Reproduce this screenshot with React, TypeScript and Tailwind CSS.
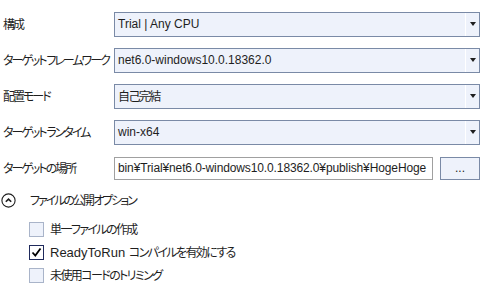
import type { ReactNode } from "react";

const font = { fontFamily: '"Liberation Sans", "Noto Sans CJK JP", sans-serif' };

// Japanese runs: proportional kana, tightened to the narrow UI font of the reference
function J({ children, tight }: { children: ReactNode; tight?: boolean }) {
  return (
    <span
      className={
        tight
          ? 'font-["Noto_Sans_CJK_JP"] text-[12px] tracking-[-2px] [font-feature-settings:"palt"_1]'
          : 'font-["Noto_Sans_CJK_JP"] text-[12px] tracking-[-1.6px] [font-feature-settings:"palt"_1]'
      }
    >
      {children}
    </span>
  );
}

function Dropdown({ value }: { value: ReactNode }) {
  return (
    <div className="flex h-[25px] w-full items-stretch border border-[#7a8aa6] bg-[#eef2fb]">
      <div className="flex flex-1 items-center truncate whitespace-nowrap pl-[3px] text-[12px] text-[#1e1e1e]">{value}</div>
      <div className="flex w-[14px] items-center justify-center border-l border-white">
        <svg width="6" height="4" viewBox="0 0 6 4">
          <path d="M0 0h6L3 4z" fill="#1e1e1e" />
        </svg>
      </div>
    </div>
  );
}

function Row({ label, children }: { label: string; children: ReactNode }) {
  return (
    <div className="grid h-9 grid-cols-[114px_1fr] items-center">
      <div className="whitespace-nowrap pl-[3px] text-[12px] text-[#1e1e1e]">
        <J tight>{label}</J>
      </div>
      {children}
    </div>
  );
}

function Check({ label, checked }: { label: ReactNode; checked?: boolean }) {
  return (
    <div className="flex h-[23px] items-center gap-[6px] pl-[29px]">
      <div
        className={
          checked
            ? "flex h-[15px] w-[15px] items-center justify-center border border-[#1f2a5c] bg-white"
            : "h-[15px] w-[15px] border border-[#a9b4c9] bg-[#eef2fb]"
        }
      >
        {checked && (
          <svg width="11" height="11" viewBox="0 0 11 11">
            <path d="M1.5 5.5l2.8 3L9.5 1.5" fill="none" stroke="#000" strokeWidth="1.8" />
          </svg>
        )}
      </div>
      <span className="whitespace-nowrap text-[13px] text-[#1e1e1e]">{label}</span>
    </div>
  );
}

export default function App() {
  return (
    <div className="h-[291px] w-[484px] overflow-hidden bg-white pr-[4px] pt-[6px]" style={font}>
      <Row label="構成">
        <Dropdown value="Trial | Any CPU" />
      </Row>
      <Row label="ターゲット フレームワーク">
        <Dropdown value="net6.0-windows10.0.18362.0" />
      </Row>
      <Row label="配置モード">
        <Dropdown value={<J>自己完結</J>} />
      </Row>
      <Row label="ターゲット ランタイム">
        <Dropdown value="win-x64" />
      </Row>
      <Row label="ターゲットの場所">
        <div className="flex items-center gap-[7px]">
          <div className="flex h-[23px] min-w-0 flex-1 items-center overflow-hidden whitespace-nowrap border border-[#a0a0a0] bg-white pl-[3px] text-[12px] tracking-[-0.12px] text-[#1e1e1e]">
            bin¥Trial¥net6.0-windows10.0.18362.0¥publish¥HogeHoge
          </div>
          <div className="flex h-[23px] w-[40px] items-center justify-center border border-[#7a8aa6] bg-[#eef2fb] text-[12px] text-[#1e1e1e]">
            ...
          </div>
        </div>
      </Row>
      <div className="flex h-7 items-center gap-[14px] pl-[1px]">
        <svg width="15" height="15" viewBox="0 0 15 15">
          <circle cx="7.5" cy="7.5" r="6.6" fill="none" stroke="#1e1e1e" strokeWidth="1.1" />
          <path d="M4.8 8.8L7.5 6.1l2.7 2.7" fill="none" stroke="#1e1e1e" strokeWidth="1.6" />
        </svg>
        <span className="whitespace-nowrap text-[#1e1e1e]">
          <J tight>ファイルの公開オプション</J>
        </span>
      </div>
      <div className="pt-[4px]">
        <Check label={<J>単一ファイルの作成</J>} />
        <Check
          label={
            <>
              ReadyToRun <J>コンパイルを有効にする</J>
            </>
          }
          checked
        />
        <Check label={<J>未使用コードのトリミング</J>} />
      </div>
    </div>
  );
}
